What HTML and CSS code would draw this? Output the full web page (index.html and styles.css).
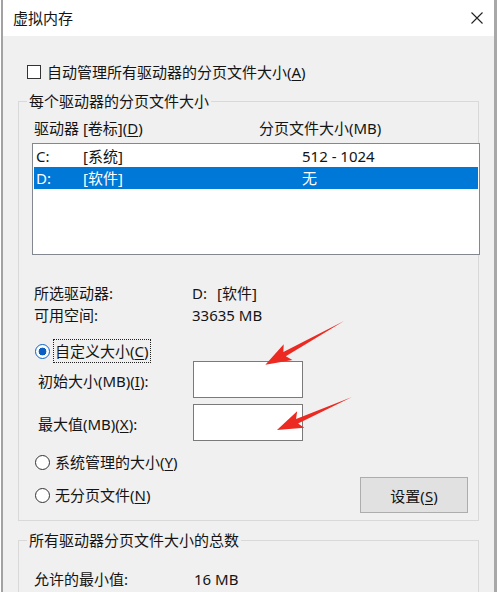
FILE: index.html
```html
<!DOCTYPE html>
<html lang="zh-CN">
<head>
<meta charset="utf-8">
<title>虚拟内存</title>
<link rel="stylesheet" href="styles.css">
</head>
<body>
<div class="window">
  <div class="titlebar">
    <span class="title">虚拟内存</span>
    <svg class="close" width="12" height="12" viewBox="0 0 12 12"><path d="M0.5 0.5L11.5 11.5M11.5 0.5L0.5 11.5" stroke="#222" stroke-width="1.1" fill="none"/></svg>
  </div>
  <div class="content">
    <div class="check-row"><span class="checkbox"></span><span>自动管理所有驱动器的分页文件大小(<u>A</u>)</span></div>

    <fieldset class="group g1">
      <legend>每个驱动器的分页文件大小</legend>
      <div class="list-head"><span class="h-drive">驱动器 [卷标](<u>D</u>)</span><span>分页文件大小(MB)</span></div>
      <div class="listbox">
        <div class="row"><span class="c-drive">C:</span><span class="c-label">[系统]</span><span>512 - 1024</span></div>
        <div class="row selected"><span class="c-drive">D:</span><span class="c-label">[软件]</span><span>无</span></div>
      </div>
      <div class="info">
        <span>所选驱动器:</span><span><span class="drv">D:</span>[软件]</span>
        <span>可用空间:</span><span>33635 MB</span>
      </div>
      <div class="radio-row custom"><span class="radio checked"></span><span class="rlabel focus">自定义大小(<u>C</u>)</span></div>
      <div class="fields">
        <span>初始大小(MB)(<u>I</u>):</span><span class="textbox"></span>
        <span>最大值(MB)(<u>X</u>):</span><span class="textbox"></span>
      </div>
      <div class="radio-row system"><span class="radio"></span><span class="rlabel">系统管理的大小(<u>Y</u>)</span></div>
      <div class="last-row">
        <div class="radio-row"><span class="radio"></span><span class="rlabel">无分页文件(<u>N</u>)</span></div>
        <button class="btn" type="button">设置(<u>S</u>)</button>
      </div>
    </fieldset>

    <fieldset class="group g2">
      <legend>所有驱动器分页文件大小的总数</legend>
      <div class="total"><span>允许的最小值:</span><span>16 MB</span></div>
    </fieldset>
  </div>

  <svg class="arrows" width="501" height="592" viewBox="0 0 501 592">
    <polygon class="arrow" transform="translate(344 321) rotate(150.9)" points="0,0 68,-2.5 64,-9 90,0 64,9 68,2.5"/>
    <polygon class="arrow" transform="translate(352 397) rotate(156.25)" points="0,0 60,-2.5 56,-9 82,0 56,9 60,2.5"/>
  </svg>
</div>
</body>
</html>
```

FILE: styles.css
```css
* { box-sizing: border-box; }

html, body {
  margin: 0;
  padding: 0;
  background: #ffffff;
}

body {
  font-family: "Noto Sans", "Noto Sans CJK SC", sans-serif;
  font-size: 15px;
  color: #141414;
  width: 501px;
  height: 592px;
  overflow: hidden;
}

.window {
  position: relative;
  margin-left: 1px;
  width: 496px;
  height: 592px;
  border-left: 2px solid #a2a2a2;
  border-right: 3px solid #a8a8a8;
  background: #f0f0f0;
}

.titlebar {
  height: 36px;
  background: #ffffff;
  display: flex;
  align-items: center;
  justify-content: space-between;
  padding: 0 11px 0 10px;
}

.title {
  line-height: 20px;
}

.close {
  display: block;
}

.content {
  padding-left: 15px;
}

u {
  text-decoration-thickness: 1px;
  text-underline-offset: 2px;
}

/* checkbox row */
.check-row {
  margin-top: 26px;
  height: 20px;
  line-height: 20px;
  display: flex;
  align-items: center;
  padding-left: 9px;
  gap: 6px;
}

.checkbox {
  width: 14px;
  height: 14px;
  border: 1px solid #333333;
  background: #ffffff;
}

/* group boxes */
.group {
  margin: 0;
  min-inline-size: 0;
  width: 461px;
  border: 1px solid #d9d9d9;
  padding: 0 10px 7px 15px;
}

.group legend {
  padding: 0 2px;
  margin-left: -7px;
  line-height: 20px;
  height: 20px;
}

.g1 {
  margin-top: 9px;
}

.g2 {
  margin-top: 9px;
  height: 80px;
}

.list-head {
  margin-top: 7px;
  height: 20px;
  line-height: 20px;
  display: flex;
}

.h-drive {
  width: 225px;
}

/* list box */
.listbox {
  margin-top: 5px;
  margin-left: -2px;
  margin-right: -12px;
  height: 112px;
  border: 1px solid #828790;
  background: #ffffff;
  padding: 1px;
}

.row {
  height: 22px;
  line-height: 22px;
  display: flex;
  padding-left: 2px;
}

.row.selected {
  background: #0078d7;
  color: #ffffff;
}

.c-drive {
  width: 47px;
}

.c-label {
  width: 219px;
}

/* info */
.info {
  margin-top: 27px;
  display: grid;
  grid-template-columns: 158px auto;
  grid-auto-rows: 22px;
  line-height: 22px;
}

.drv {
  display: inline-block;
  width: 25px;
}

/* radio rows */
.radio-row {
  display: flex;
  align-items: center;
  height: 24px;
  padding-left: 1px;
  gap: 3px;
}

.radio-row.custom {
  margin-top: 13px;
}

.radio-row.system {
  margin-top: 9px;
}

.radio {
  width: 15px;
  height: 15px;
  border-radius: 50%;
  border: 1px solid #333333;
  background: #ffffff;
  flex: none;
}

.radio.checked {
  border-color: #0a64c8;
  background: radial-gradient(circle, #0a5fc0 0 3.6px, #ffffff 4.2px);
}

.rlabel {
  line-height: 20px;
  padding: 1px;
  border: 1px solid transparent;
}

.rlabel.focus {
  border: 1px dotted #222222;
}

/* size fields */
.fields {
  margin-top: -2px;
  padding-left: 4px;
  display: grid;
  grid-template-columns: 155px 110px;
  grid-auto-rows: 37px;
  row-gap: 6px;
  align-items: center;
  line-height: 20px;
}

.fields > span:not(.textbox) {
  padding-top: 3px;
}

.textbox {
  height: 37px;
  border: 1px solid #7a7a7a;
  background: #ffffff;
}

/* last row */
.last-row {
  margin-top: 3px;
  height: 36px;
  display: flex;
  align-items: center;
  justify-content: space-between;
}

.btn {
  width: 108px;
  height: 36px;
  border: 1px solid #adadad;
  background: #e1e1e1;
  font-family: inherit;
  font-size: 15px;
  color: #141414;
  padding: 0;
}

/* totals */
.total {
  margin-top: 19px;
  display: grid;
  grid-template-columns: 160px auto;
  line-height: 20px;
}

/* annotation arrows */
.arrows {
  position: absolute;
  left: -3px;
  top: 0;
  pointer-events: none;
}

.arrow {
  fill: #ec2a22;
}
```
